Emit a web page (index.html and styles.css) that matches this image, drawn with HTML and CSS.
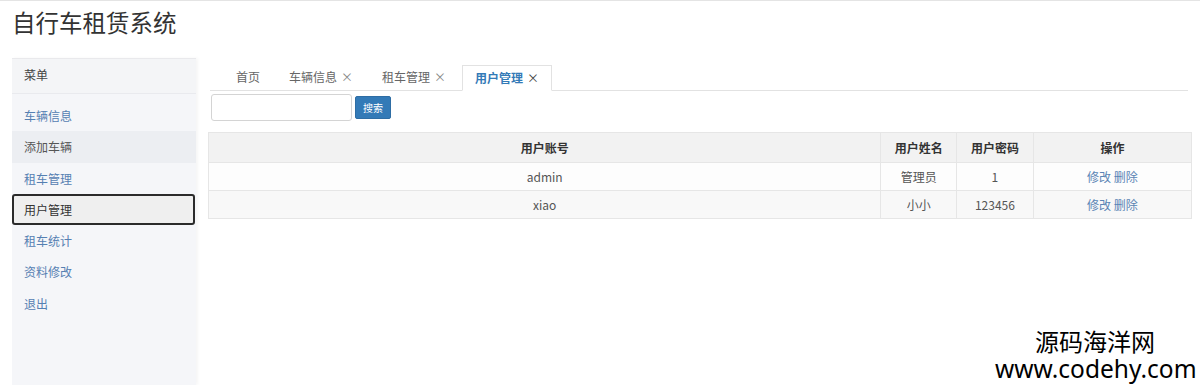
FILE: index.html
```html
<!DOCTYPE html>
<html lang="zh-CN">

<head>
    <meta charset="UTF-8">
    <meta name="viewport" content="width=device-width, initial-scale=1.0">
    <title>自行车租赁系统</title>
    <link rel="stylesheet" href="styles.css">
</head>

<body>
    <div class="page">
        <h1 class="app-title">自行车租赁系统</h1>
        <div class="layout">
            <div class="sidebar">
                <div class="sidebar-head">菜单</div>
                <ul class="menu">
                    <li><a href="#">车辆信息</a></li>
                    <li class="hover"><a href="#">添加车辆</a></li>
                    <li><a href="#">租车管理</a></li>
                    <li class="active"><a href="#">用户管理</a></li>
                    <li><a href="#">租车统计</a></li>
                    <li><a href="#">资料修改</a></li>
                    <li><a href="#">退出</a></li>
                </ul>
            </div>
            <div class="content">
                <ul class="tabs">
                    <li>首页</li>
                    <li>车辆信息<span class="close">×</span></li>
                    <li>租车管理<span class="close">×</span></li>
                    <li class="current">用户管理<span class="close">×</span></li>
                </ul>
                <div class="search">
                    <input type="text" class="search-input">
                    <button class="btn-search">搜索</button>
                </div>
                <table class="user-table">
                    <thead>
                        <tr>
                            <th class="c1">用户账号</th>
                            <th class="c2">用户姓名</th>
                            <th class="c3">用户密码</th>
                            <th class="c4">操作</th>
                        </tr>
                    </thead>
                    <tbody>
                        <tr>
                            <td>admin</td>
                            <td>管理员</td>
                            <td>1</td>
                            <td><a href="#">修改</a> <a href="#">删除</a></td>
                        </tr>
                        <tr>
                            <td>xiao</td>
                            <td>小小</td>
                            <td>123456</td>
                            <td><a href="#">修改</a> <a href="#">删除</a></td>
                        </tr>
                    </tbody>
                </table>
            </div>
        </div>
        <div class="watermark">
            <div class="wm-cn">源码海洋网</div>
            <div class="wm-en">www.codehy.com</div>
        </div>
    </div>
</body>

</html>
```

FILE: styles.css
```css
body,
html {
    width: 100%;
    height: 100%;
    padding: 0;
    margin: 0;
}

body {
    font-family: "Noto Sans CJK SC", "Noto Sans", sans-serif;
    font-size: 12px;
    color: #333;
    background: #fff;
    overflow: hidden;
}

.page {
    position: relative;
    height: 385px;
    border-top: 1px solid #e4e4e4;
    box-sizing: border-box;
}

.app-title {
    margin: 0;
    padding: 4px 0 0 12px;
    height: 53px;
    font-size: 23.5px;
    font-weight: normal;
    line-height: 34px;
    color: #333;
}

.layout {
    display: flex;
    height: 327px;
}

.sidebar {
    width: 184px;
    margin-left: 12px;
    background: #f5f6f9;
    box-shadow: 2px 0 3px rgba(0, 0, 0, 0.04);
}

.sidebar-head {
    height: 34px;
    line-height: 32px;
    padding-left: 12px;
    color: #444;
    border-top: 1px solid #e9e9ec;
    border-bottom: 1px solid #e9eaee;
    background: #f4f5f7;
}

.menu {
    list-style: none;
    margin: 6px 0 0;
    padding: 0;
}

.menu li {
    height: 31.3px;
    box-sizing: border-box;
}

.menu li a {
    display: block;
    height: 100%;
    line-height: 31.3px;
    padding-left: 12px;
    color: #5580b2;
    text-decoration: none;
}

.menu li.hover {
    background: #eceef2;
}

.menu li.hover a {
    color: #555;
}

.menu li.active a {
    border: 2px solid #2b2b2b;
    border-radius: 3px;
    background: #efefef;
    color: #333;
    padding-left: 10px;
    height: 31px;
    line-height: 27px;
    margin-right: 1px;
    box-sizing: border-box;
}

.content {
    flex: 1;
    padding: 7px 8px 0 12px;
}

.tabs {
    display: flex;
    list-style: none;
    margin: 0 4px 0 2px;
    padding: 0 0 0 13px;
    height: 25px;
    border-bottom: 1px solid #e2e2e2;
}

.tabs li {
    height: 25px;
    line-height: 23px;
    padding: 0 13px;
    margin-right: 3px;
    color: #666;
    box-sizing: border-box;
}

.tabs .close {
    margin-left: 4px;
    color: #888;
    font-size: 12px;
}

.tabs li.current {
    height: 26px;
    background: #fff;
    border: 1px solid #e2e2e2;
    border-bottom-color: #fff;
    color: #337ab7;
    font-weight: bold;
    padding: 0 12px;
}

.tabs li.current .close {
    color: #444;
    font-weight: normal;
}

.search {
    display: flex;
    align-items: center;
    margin: 3px 0 0 3px;
    height: 27px;
}

.search-input {
    width: 141px;
    height: 27px;
    box-sizing: border-box;
    border: 1px solid #d4d4d4;
    border-radius: 3px;
    outline: none;
}

.btn-search {
    margin-left: 3px;
    width: 36px;
    height: 23px;
    padding: 0;
    border: 1px solid #2e6da4;
    border-radius: 2px;
    background: #337ab7;
    color: #fff;
    font-family: inherit;
    font-size: 10px;
}

.user-table {
    margin-top: 11px;
    width: 984px;
    border-collapse: collapse;
    border: 1px solid #ececec;
}

.user-table th,
.user-table td {
    text-align: center;
    border: 1px solid #e6e6e6;
    padding: 0;
}

.user-table th {
    height: 29px;
    background: #f2f2f2;
    font-weight: bold;
    color: #333;
}

.user-table td {
    height: 27px;
    color: #555;
}

.user-table tbody tr:nth-child(1) td {
    background: #fdfdfd;
}

.user-table tbody tr:nth-child(2) td {
    background: #f8f8f8;
}

.user-table td a {
    color: #5a84b4;
    text-decoration: none;
}

.user-table .c1 {
    width: 675px;
}

.user-table .c2 {
    width: 75px;
}

.user-table .c3 {
    width: 76px;
}

.user-table .c4 {
    width: 158px;
}

.watermark {
    position: absolute;
    right: 5px;
    top: 326px;
    width: 200px;
    text-align: center;
    color: #000;
}

.wm-cn {
    font-size: 24px;
    line-height: 27px;
}

.wm-en {
    font-family: "Noto Sans", sans-serif;
    font-size: 24.5px;
    line-height: 29px;
}
```
